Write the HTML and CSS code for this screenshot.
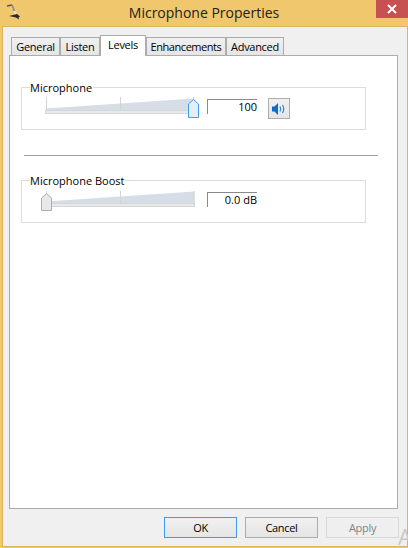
FILE: index.html
```html
<!DOCTYPE html>
<html lang="en">
<head>
<meta charset="utf-8">
<title>Microphone Properties</title>
<link rel="stylesheet" href="styles.css">
</head>
<body>
<div class="window">
  <header class="titlebar">
    <svg class="app-icon" width="22" height="22" viewBox="0 0 22 22">
      <path d="M7 6 L12 5" stroke="#555" stroke-width="1.5" fill="none"/>
      <path d="M12 5 L14.5 11" stroke="#8a8a80" stroke-width="1.6" fill="none"/>
      <path d="M14.500 11 L16 15" stroke="#e4e4dc" stroke-width="2" fill="none"/>
      <path d="M9 16 L17 14 L20 16.500 L18.500 17.500 L19 19.500 L16 17.500 Z" fill="#2b2b2b"/>
    </svg>
    <h1 class="title">Microphone Properties</h1>
    <button class="close" aria-label="Close">
      <svg width="10" height="10" viewBox="0 0 10 10"><path d="M1 1 L9 9 M9 1 L1 9" stroke="#fff" stroke-width="2"/></svg>
    </button>
  </header>
  <div class="client">
    <nav class="tabs">
      <span class="tab tab-general">General</span>
      <span class="tab tab-listen">Listen</span>
      <span class="tab tab-levels">Levels</span>
      <span class="tab tab-enh">Enhancements</span>
      <span class="tab tab-adv">Advanced</span>
    </nav>
    <main class="panel">
      <fieldset class="group">
        <legend class="legend">Microphone</legend>
        <div class="row row-mic">
          <svg class="slider" width="160" height="30" viewBox="0 0 160 30">
            <path d="M1 19.500 L149 9.500 L149 21 L1 21 Z" fill="#d5dee6"/>
            <rect x="1" y="8" width="1" height="14" fill="#d4d4d4"/>
            <rect x="75" y="8" width="1" height="14" fill="#d4d4d4"/>
            <rect x="148" y="8" width="1" height="14" fill="#d4d4d4"/>
            <rect x="0.500" y="21.500" width="148" height="3" fill="#e7eaea" stroke="#d6d6d6"/>
            <path d="M143.500 28.500 V15 L148.500 10.500 L153.500 15 V28.500 Z" fill="#e4eef7" stroke="#3d9bf0"/>
          </svg>
          <div class="value value-mic">100</div>
          <button class="speaker" aria-label="Mute">
            <svg width="14" height="12" viewBox="0 0 14 12">
              <path d="M0 3.500 H2.500 L6 0 V12 L2.500 8.500 H0 Z" fill="#0f6cc9"/>
              <path d="M8 3.500 Q9.300 6 8 8.500 M10.500 2 Q13 6 10.500 10" stroke="#2f86d8" stroke-width="1.200" fill="none"/>
            </svg>
          </button>
        </div>
      </fieldset>
      <hr class="divider">
      <fieldset class="group">
        <legend class="legend">Microphone Boost</legend>
        <div class="row row-boost">
          <svg class="slider" width="160" height="30" viewBox="0 0 160 30">
            <path d="M1 18.500 L149.500 8.500 L149.500 20 L1 20 Z" fill="#d5dee6"/>
            <rect x="1" y="8" width="1" height="13" fill="#d4d4d4"/>
            <rect x="75" y="8" width="1" height="13" fill="#d4d4d4"/>
            <rect x="148.500" y="8" width="1" height="13" fill="#d4d4d4"/>
            <rect x="0.500" y="20.500" width="149" height="3" fill="#e7eaea" stroke="#d6d6d6"/>
            <path d="M-3.500 27.500 V15 L1.500 10.500 L6.500 15 V27.500 Z" fill="#e8e8e8" stroke="#adadad"/>
          </svg>
          <div class="value value-boost">0.0 dB</div>
        </div>
      </fieldset>
    </main>
    <footer class="actions">
      <button class="btn btn-default">OK</button>
      <button class="btn">Cancel</button>
      <button class="btn btn-disabled">Apply</button>
    </footer>
  </div>
  <span class="corner">A</span>
</div>
</body>
</html>
```
FILE: styles.css
```css
* { box-sizing: border-box; }
html, body { margin: 0; height: 100%; }
body {
  width: 408px;
  height: 548px;
  overflow: hidden;
  background: #ffffff;
  font-family: "Open Sans", "Noto Sans", sans-serif;
  font-size: 11px;
  color: #000;
}
.window {
  position: relative;
  width: 408px;
  height: 548px;
  display: flex;
  flex-direction: column;
  background: #f0c76c;
  overflow: hidden;
}
.titlebar {
  flex: 0 0 27px;
  display: flex;
  align-items: flex-start;
  position: relative;
}
.app-icon { position: absolute; left: 0; top: 0; }
.title {
  margin: 3px 0 0;
  width: 100%;
  text-align: center;
  font-size: 14px;
  line-height: 20px;
  font-weight: 400;
  color: #222;
}
.close {
  position: absolute;
  right: 0;
  top: 0;
  width: 32px;
  height: 18px;
  border: 0;
  padding: 0;
  background: #c75050;
  display: flex;
  align-items: center;
  justify-content: center;
}
.client {
  flex: 0 0 519px;
  margin: 0 1px 0 3px;
  background: #f0f0f0;
  padding: 7px 0 0 6px;
  display: flex;
  flex-direction: column;
  box-shadow: 0 0 0 1px #deb35e;
}
.tabs {
  display: flex;
  align-items: flex-end;
  height: 21px;
  padding-left: 2px;
  position: relative;
  z-index: 1;
}
.tab {
  height: 18px;
  border: 1px solid #acacac;
  border-bottom: 0;
  background: linear-gradient(#f0f0f0, #e5e5e5);
  line-height: 17px;
  text-align: center;
  letter-spacing: -0.3px;
}
.tab-general { width: 49px; }
.tab-listen { width: 40px; }
.tab-levels {
  width: 46px;
  height: 21px;
  background: #fff;
  line-height: 18px;
  margin-bottom: -1px;
}
.tab-enh { width: 80px; letter-spacing: -0.45px; }
.tab-adv { width: 58px; }
.panel {
  width: 389px;
  height: 454px;
  background: #fff;
  border: 1px solid #acacac;
  padding: 23px 0 0 11px;
}
.group {
  margin: 0;
  width: 345px;
  height: 51px;
  border: 1px solid #dcdcdc;
  padding: 0 0 0 8px;
  min-width: 0;
}
.legend {
  padding: 2px 1px 0 0;
  line-height: 14px;
}
.row {
  display: flex;
  align-items: flex-start;
}
.row-mic { margin-top: -6px; }
.row-boost { margin-top: -5px; }
.slider { overflow: visible; flex: none; margin-left: 15px; }
.value {
  width: 50px;
  height: 15px;
  margin-left: 2px;
  border-top: 1px solid #8a8a8a;
  border-left: 1px solid #8a8a8a;
  text-align: right;
  line-height: 14px;
}
.value-mic { margin-top: 10px; }
.value-boost { margin-top: 9px; }
.speaker {
  width: 22px;
  height: 21px;
  margin: 9px 0 0 11px;
  padding: 0;
  border: 1px solid #adadad;
  background: linear-gradient(#f0f0f0, #e5e5e5);
  display: flex;
  align-items: center;
  justify-content: center;
}
.divider {
  width: 354px;
  height: 1px;
  margin: 25px 0 16px 3px;
  border: 0;
  background: #a0a0a0;
}
.actions {
  display: flex;
  gap: 8px;
  padding: 8px 0 0 155px;
}
.btn {
  width: 73px;
  height: 21px;
  padding: 0;
  border: 1px solid #acacac;
  background: linear-gradient(#f0f0f0, #e5e5e5);
  font: inherit;
  line-height: 17px;
  letter-spacing: -0.3px;
  color: #000;
}
.btn-default { border-color: #3d9bf0; }
.btn-disabled { border-color: #d9d9d9; background: #efefef; color: #838383; }
.corner {
  position: absolute;
  left: 398px;
  top: 522px;
  font-size: 22px;
  line-height: 28px;
  color: #c8c8c8;
}
```
